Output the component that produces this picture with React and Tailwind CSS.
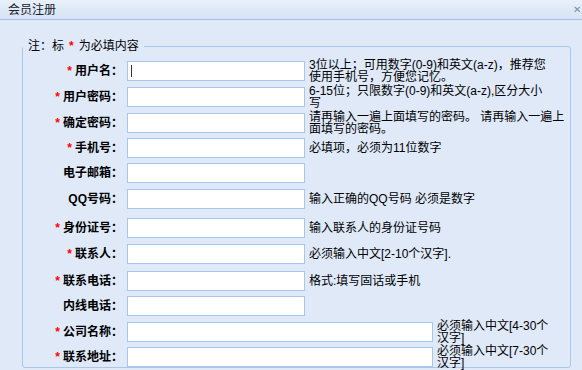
import React from 'react'

const rows = [
  { label: '用户名', req: true, mt: 'mt-[7px]', help: ['3位以上；可用数字(0-9)和英文(a-z)，推荐您', '使用手机号，方便您记忆。'], caret: true },
  { label: '用户密码', req: true, mt: 'mt-[6px]', help: ['6-15位；只限数字(0-9)和英文(a-z),区分大小', '写'] },
  { label: '确定密码', req: true, mt: 'mt-[6px]', help: ['请再输入一遍上面填写的密码。 请再输入一遍上', '面填写的密码。'] },
  { label: '手机号', req: true, mt: 'mt-[5px]', help: ['必填项，必须为11位数字'] },
  { label: '电子邮箱', req: false, mt: 'mt-[5px]', help: [] },
  { label: 'QQ号码', req: false, mt: 'mt-[6px]', help: ['输入正确的QQ号码 必须是数字'] },
  { label: '身份证号', req: true, mt: 'mt-[9px]', help: ['输入联系人的身份证号码'] },
  { label: '联系人', req: true, mt: 'mt-[6px]', help: ['必须输入中文[2-10个汉字].'] },
  { label: '联系电话', req: true, mt: 'mt-[7px]', help: ['格式:填写固话或手机'] },
  { label: '内线电话', req: false, mt: 'mt-[5px]', help: [] },
  { label: '公司名称', req: true, mt: 'mt-[6px]', help: ['必须输入中文[4-30个', '汉字]'], wide: true },
  { label: '联系地址', req: true, mt: 'mt-[5px]', help: ['必须输入中文[7-30个', '汉字]'], wide: true },
]

function FormRow({ row }) {
  return (
    <div className={`flex items-center h-[20px] ${row.mt}`}>
      <div className="w-[100px] text-right whitespace-nowrap font-bold text-black">
        {row.req && <span className="text-[#f00] mr-[3px]">*</span>}
        <span>{row.label}：</span>
      </div>
      <div
        className={`ml-[4px] h-[20px] bg-white border border-[#a8c6ea] relative ${row.wide ? 'w-[306px]' : 'w-[178px]'}`}
      >
        {row.caret && <span className="absolute left-[3px] top-[3px] w-[1px] h-[12px] bg-[#333]" />}
      </div>
      {row.help.length > 0 && (
        <div className="ml-[4px] whitespace-nowrap leading-[12px] text-black">
          {row.help.map((line, i) => (
            <div key={i}>{line}</div>
          ))}
        </div>
      )}
    </div>
  )
}

export default function App() {
  return (
    <div className="w-[582px] h-[370px] overflow-hidden bg-[#dfe9f8] text-[12px] font-['Liberation_Sans','Noto_Sans_CJK_SC',sans-serif] relative">
      {/* title bar */}
      <div className="h-[20px] flex items-center justify-between pl-[8px] bg-gradient-to-b from-[#e9f1fb] to-[#d5e3f4] border-b border-[#a3c1e6] text-[#18202b]">
        <span>会员注册</span>
        <span className="text-[#7d8ca0] text-[10px] mr-[1px] leading-none">✕</span>
      </div>

      <fieldset className="ml-[22px] mt-[18px] w-[549px] h-[330px] border border-[#a9c7eb] rounded-[3px]">
        <legend className="px-[5px] leading-[16px]">
          注：标<span className="text-[#f00] font-bold mx-[5px]">*</span>为必填内容
        </legend>
        {rows.map((row) => (
          <FormRow key={row.label} row={row} />
        ))}
      </fieldset>
    </div>
  )
}
